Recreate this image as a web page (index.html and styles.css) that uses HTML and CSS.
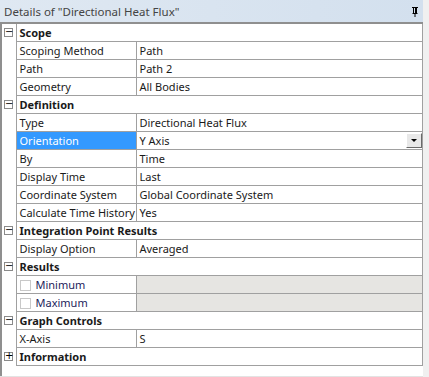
FILE: index.html
```html
<!DOCTYPE html>
<html lang="en">
<head>
    <meta charset="UTF-8">
    <title>Details</title>
    <link rel="stylesheet" href="styles.css">
</head>
<body>
    <div class="panel">
        <div class="title">
            <span>Details of "Directional Heat Flux"</span>
            <svg class="pin" width="8" height="10" viewBox="0 0 8 10">
                <path d="M1 0.5h6M1.5 6.5h5M4 6.5v3.5" stroke="#000" stroke-width="1" fill="none"/>
                <rect x="2" y="1" width="1" height="5" fill="#000"/>
                <rect x="4" y="1" width="2" height="5" fill="#000"/>
            </svg>
        </div>
        <div class="frame">
            <table class="grid">
                <colgroup>
                    <col class="c-gutter">
                    <col class="c-name">
                    <col>
                </colgroup>
                <tr class="group">
                    <td class="gutter"><span class="toggle">&minus;</span></td>
                    <td colspan="2">Scope</td>
                </tr>
                <tr><td class="gutter"></td><td class="name">Scoping Method</td><td class="value">Path</td></tr>
                <tr><td class="gutter"></td><td class="name">Path</td><td class="value">Path 2</td></tr>
                <tr><td class="gutter"></td><td class="name">Geometry</td><td class="value">All Bodies</td></tr>
                <tr class="group">
                    <td class="gutter"><span class="toggle">&minus;</span></td>
                    <td colspan="2">Definition</td>
                </tr>
                <tr><td class="gutter"></td><td class="name">Type</td><td class="value">Directional Heat Flux</td></tr>
                <tr>
                    <td class="gutter"></td>
                    <td class="name selected">Orientation</td>
                    <td class="value"><div class="combo"><span>Y Axis</span><span class="drop"></span></div></td>
                </tr>
                <tr><td class="gutter"></td><td class="name">By</td><td class="value">Time</td></tr>
                <tr><td class="gutter"></td><td class="name">Display Time</td><td class="value">Last</td></tr>
                <tr><td class="gutter"></td><td class="name">Coordinate System</td><td class="value">Global Coordinate System</td></tr>
                <tr><td class="gutter"></td><td class="name">Calculate Time History</td><td class="value">Yes</td></tr>
                <tr class="group">
                    <td class="gutter"><span class="toggle">&minus;</span></td>
                    <td colspan="2">Integration Point Results</td>
                </tr>
                <tr><td class="gutter"></td><td class="name">Display Option</td><td class="value">Averaged</td></tr>
                <tr class="group">
                    <td class="gutter"><span class="toggle">&minus;</span></td>
                    <td colspan="2">Results</td>
                </tr>
                <tr><td class="gutter"></td><td class="name check"><span class="box"></span>Minimum</td><td class="value off"></td></tr>
                <tr><td class="gutter"></td><td class="name check"><span class="box"></span>Maximum</td><td class="value off"></td></tr>
                <tr class="group">
                    <td class="gutter"><span class="toggle">&minus;</span></td>
                    <td colspan="2">Graph Controls</td>
                </tr>
                <tr><td class="gutter"></td><td class="name">X-Axis</td><td class="value">S</td></tr>
                <tr class="group">
                    <td class="gutter"><span class="toggle">+</span></td>
                    <td colspan="2">Information</td>
                </tr>
            </table>
        </div>
    </div>
</body>
</html>
```

FILE: styles.css
```css
body {
    margin: 0;
    background: #f0f0f0;
    font-family: "Noto Sans", "Liberation Sans", sans-serif;
    font-size: 11px;
    color: #1a1a1a;
}
.panel {
    width: 423px;
    height: 376px;
    background: #fff;
    border-bottom: 1px solid #e3e3e3;
}
.title {
    height: 22px;
    display: flex;
    align-items: center;
    justify-content: space-between;
    padding: 0 4px 0 4px;
    background: linear-gradient(to right, #dfe8f2, #d3e0ee);
    color: #444;
    font-size: 11.5px;
}
.pin {
    display: block;
    margin-top: 2px;
}
.frame {
    border-top: 2px solid #8f8f8f;
    border-left: 2px solid #8f8f8f;
    height: 352px;
}
.grid {
    border-collapse: collapse;
    table-layout: fixed;
    width: 421px;
}
.c-gutter {
    width: 14px;
}
.c-name {
    width: 120px;
}
.grid td {
    height: 17px;
    padding: 0 0 0 3px;
    line-height: 17px;
    white-space: nowrap;
    overflow: hidden;
    border-bottom: 1px solid #a0a0a0;
}
.grid td.gutter {
    padding: 0;
    border-bottom: none;
    border-right: 1px solid #a0a0a0;
    position: relative;
}
.grid td.name {
    border-right: 1px solid #a0a0a0;
}
.grid td.value {
    border-right: 1px solid #a0a0a0;
}
.group td {
    font-weight: bold;
    border-right: 1px solid #a0a0a0;
}
.toggle {
    position: absolute;
    left: 2px;
    top: 4px;
    width: 9px;
    height: 9px;
    box-sizing: border-box;
    border: 1px solid #8a8a8a;
    background: #fff;
    font-size: 10px;
    line-height: 6px;
    text-align: center;
    font-weight: normal;
    font-family: "DejaVu Sans", sans-serif;
    color: #000;
}
.selected {
    background: #3399ff;
    color: #fff;
}
.combo {
    display: flex;
    justify-content: space-between;
    align-items: center;
}
.drop {
    width: 16px;
    height: 15px;
    box-sizing: border-box;
    background: #e8e8e8;
    border: 1px solid;
    border-color: #fff #6a6a6a #6a6a6a #fff;
    position: relative;
}
.drop::after {
    content: "";
    position: absolute;
    left: 4px;
    top: 5px;
    border-left: 3px solid transparent;
    border-right: 3px solid transparent;
    border-top: 3px solid #000;
}
.check {
    color: #1c1c5a;
}
.box {
    display: inline-block;
    width: 11px;
    height: 11px;
    box-sizing: border-box;
    border: 1px solid #c8c8c8;
    background: #fff;
    vertical-align: -2px;
    margin-right: 5px;
}
.value.off {
    background: #e6e5e2;
}
```
